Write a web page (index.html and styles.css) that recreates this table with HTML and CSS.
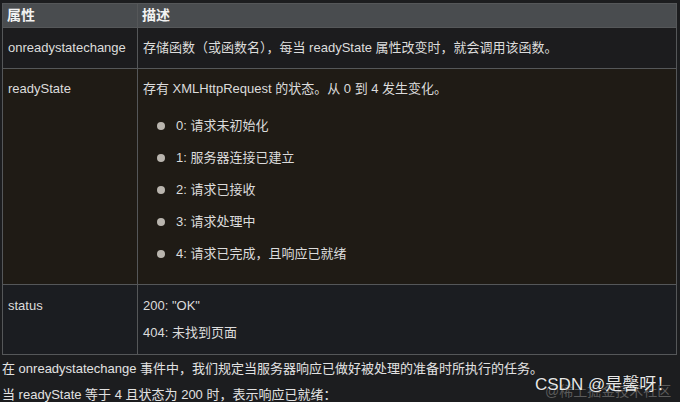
FILE: index.html
```html
<!DOCTYPE html>
<html lang="zh">
<head>
<meta charset="utf-8">
<link rel="stylesheet" href="styles.css">
</head>
<body>
<div class="page">
<table class="props">
  <thead>
    <tr><th class="c1">属性</th><th>描述</th></tr>
  </thead>
  <tbody>
    <tr class="r1">
      <td>onreadystatechange</td>
      <td>存储函数（或函数名），每当 readyState 属性改变时，就会调用该函数。</td>
    </tr>
    <tr class="r2">
      <td>readyState</td>
      <td>
        <p class="lead">存有 XMLHttpRequest 的状态。从 0 到 4 发生变化。</p>
        <ul class="states">
          <li>0: 请求未初始化</li>
          <li>1: 服务器连接已建立</li>
          <li>2: 请求已接收</li>
          <li>3: 请求处理中</li>
          <li>4: 请求已完成，且响应已就绪</li>
        </ul>
      </td>
    </tr>
    <tr class="r3">
      <td>status</td>
      <td>
        <p class="code">200: "OK"</p>
        <p class="code">404: 未找到页面</p>
      </td>
    </tr>
  </tbody>
</table>
<p class="after">在 onreadystatechange 事件中，我们规定当服务器响应已做好被处理的准备时所执行的任务。</p>
<p class="after last">当 readyState 等于 4 且状态为 200 时，表示响应已就绪：</p>
<div class="mark">
  <span class="mark-under">@稀土掘金技术社区</span>
  <span class="mark-top">CSDN @是馨呀！</span>
</div>
</div>
</body>
</html>
```
FILE: styles.css
```css
html, body {
  margin: 0;
  padding: 0;
  background: #1c1d1f;
}
body {
  font-family: "Liberation Sans", Arial, "Noto Sans CJK SC", sans-serif;
  font-size: 13px;
  color: #dcdcdc;
  overflow: hidden;
  height: 402px;
}
.page {
  position: relative;
  padding: 3px 3px 0 2px;
  height: 399px;
}
.props {
  width: 675px;
  border-collapse: collapse;
  table-layout: fixed;
}
.props th, .props td {
  border: 1px solid #555759;
  text-align: left;
  vertical-align: top;
  line-height: 20px;
}
.props th {
  background: #494c4f;
  color: #f2f2f2;
  font-weight: bold;
  padding: 1px 5px 1px 4px;
  height: 21px;
  font-size: 14px;
}
.props th.c1 { width: 125px; }
.props td {
  padding: 10px 5px 10px 5px;
}
.r1 td { background: #1c1c1e; }
.r2 td { background: #1f1b15; }
.r3 td { background: #1b1d21; }
.r3 td { padding-top: 11px; padding-bottom: 11px; }
.lead { margin: 0; }
.states {
  list-style: none;
  margin: 17px 0 10px 0;
  padding: 0 0 0 33px;
}
.states li {
  position: relative;
  margin-bottom: 12px;
}
.states li:last-child { margin-bottom: 0; }
.states li::before {
  content: "";
  position: absolute;
  left: -19px;
  top: 6px;
  width: 8px;
  height: 8px;
  border-radius: 50%;
  background: #b9b5ae;
}
.code { margin: 0; }
.code + .code { margin-top: 7px; }
.after {
  margin: 4px 0 0 0;
  line-height: 20px;
  color: #e2e2e2;
}
.after + .after { margin-top: 6px; }
.after.last { line-height: 16px; margin-top: 8px; }
.mark {
  position: absolute;
  left: 535px;
  top: 370px;
  width: 145px;
  height: 30px;
}
.mark-under {
  position: absolute;
  left: 10px;
  top: 10px;
  font-size: 14px;
  color: #5a5a5a;
  white-space: nowrap;
}
.mark-top {
  position: absolute;
  left: 0;
  top: 0;
  font-size: 17px;
  color: #e8e8e8;
  white-space: nowrap;
  text-shadow: 0 0 1px #000;
}
```
